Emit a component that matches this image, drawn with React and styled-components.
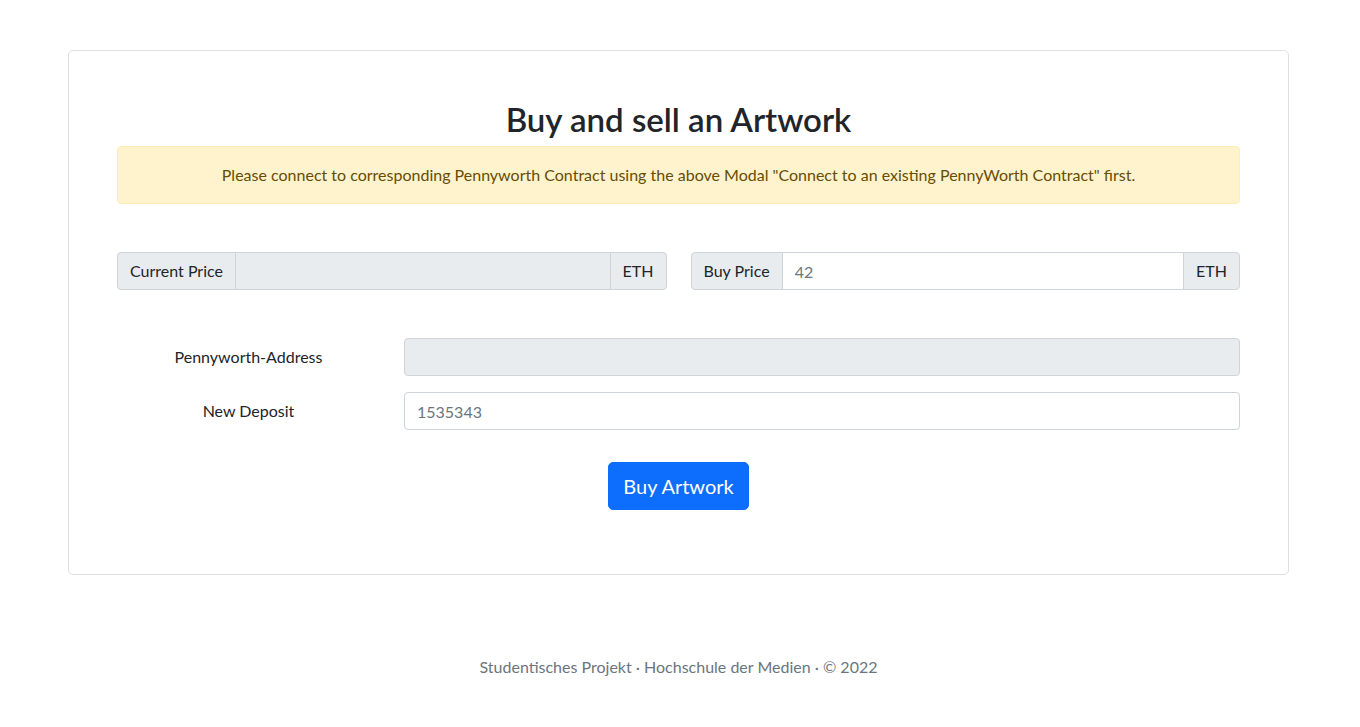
import React from "react";
import styled, { createGlobalStyle } from "styled-components";

const GlobalStyle = createGlobalStyle`
  * { box-sizing: border-box; }
  html, body { margin: 0; padding: 0; background: #fff; }
  body {
    font-family: "Segoe UI", Lato, "Noto Sans", sans-serif;
    font-size: 16px;
    line-height: 1.5;
    color: #212529;
  }
`;

const Page = styled.div`
  display: flex;
  flex-direction: column;
  align-items: flex-start;
  padding: 50px 0 0 68px;
  min-height: 727px;
`;

const Card = styled.main`
  width: 1221px;
  border: 1px solid rgba(0, 0, 0, 0.125);
  border-radius: 5px;
  padding: 49px 48px 48px;
  display: flex;
  flex-direction: column;
`;

const Title = styled.h2`
  margin: 0 0 8px;
  font-size: 33px;
  font-weight: 600;
  line-height: 38px;
  text-align: center;
  color: #212529;
`;

const Alert = styled.div`
  padding: 16px;
  border: 1px solid #ffecb5;
  border-radius: 4px;
  background: #fff3cd;
  color: #664d03;
  text-align: center;
`;

const PriceRow = styled.div`
  margin-top: 48px;
  display: grid;
  grid-template-columns: 1fr 1fr;
  column-gap: 24px;
`;

const InputGroup = styled.div`
  display: flex;
  height: 38px;
`;

const Addon = styled.span`
  display: flex;
  align-items: center;
  padding: 0 12px;
  background: #e9ecef;
  border: 1px solid #ced4da;
  color: #212529;
  white-space: nowrap;
  border-radius: ${(p) => (p.$end ? "0 4px 4px 0" : "4px 0 0 4px")};
  margin-left: ${(p) => (p.$end ? "-1px" : "0")};
`;

const Field = styled.input`
  flex: 1;
  min-width: 0;
  height: 38px;
  padding: 6px 12px;
  font: inherit;
  color: #212529;
  background: ${(p) => (p.disabled ? "#e9ecef" : "#fff")};
  border: 1px solid #ced4da;
  border-radius: ${(p) => (p.$grouped ? "0" : "4px")};
  margin-left: ${(p) => (p.$grouped ? "-1px" : "0")};
  outline: none;
  &::placeholder { color: #6c757d; opacity: 1; }
`;

const FormRows = styled.div`
  margin-top: 48px;
  display: flex;
  flex-direction: column;
  gap: 16px;
`;

const FormRow = styled.div`
  display: grid;
  grid-template-columns: 263px 1fr;
  column-gap: 24px;
  align-items: center;
`;

const Label = styled.label`
  text-align: center;
  color: #212529;
`;

const ButtonRow = styled.div`
  margin-top: 32px;
  margin-bottom: 16px;
  display: flex;
  justify-content: center;
`;

const Button = styled.button`
  font: inherit;
  font-size: 20px;
  line-height: 1.5;
  padding: 8px 14px;
  color: #fff;
  background: #0d6efd;
  border: 1px solid #0d6efd;
  border-radius: 5px;
  cursor: pointer;
`;

const Footer = styled.footer`
  width: 1221px;
  margin-top: 80px;
  text-align: center;
  color: #6c757d;
`;

export default function App() {
  return (
    <>
      <GlobalStyle />
      <Page>
        <Card>
          <Title>Buy and sell an Artwork</Title>
          <Alert>
            Please connect to corresponding Pennyworth Contract using the above Modal "Connect to an existing PennyWorth Contract" first.
          </Alert>
          <PriceRow>
            <InputGroup>
              <Addon>Current Price</Addon>
              <Field $grouped disabled />
              <Addon $end>ETH</Addon>
            </InputGroup>
            <InputGroup>
              <Addon>Buy Price</Addon>
              <Field $grouped placeholder="42" />
              <Addon $end>ETH</Addon>
            </InputGroup>
          </PriceRow>
          <FormRows>
            <FormRow>
              <Label>Pennyworth-Address</Label>
              <Field disabled />
            </FormRow>
            <FormRow>
              <Label>New Deposit</Label>
              <Field placeholder="1535343" />
            </FormRow>
          </FormRows>
          <ButtonRow>
            <Button type="button">Buy Artwork</Button>
          </ButtonRow>
        </Card>
        <Footer>Studentisches Projekt · Hochschule der Medien · © 2022</Footer>
      </Page>
    </>
  );
}
